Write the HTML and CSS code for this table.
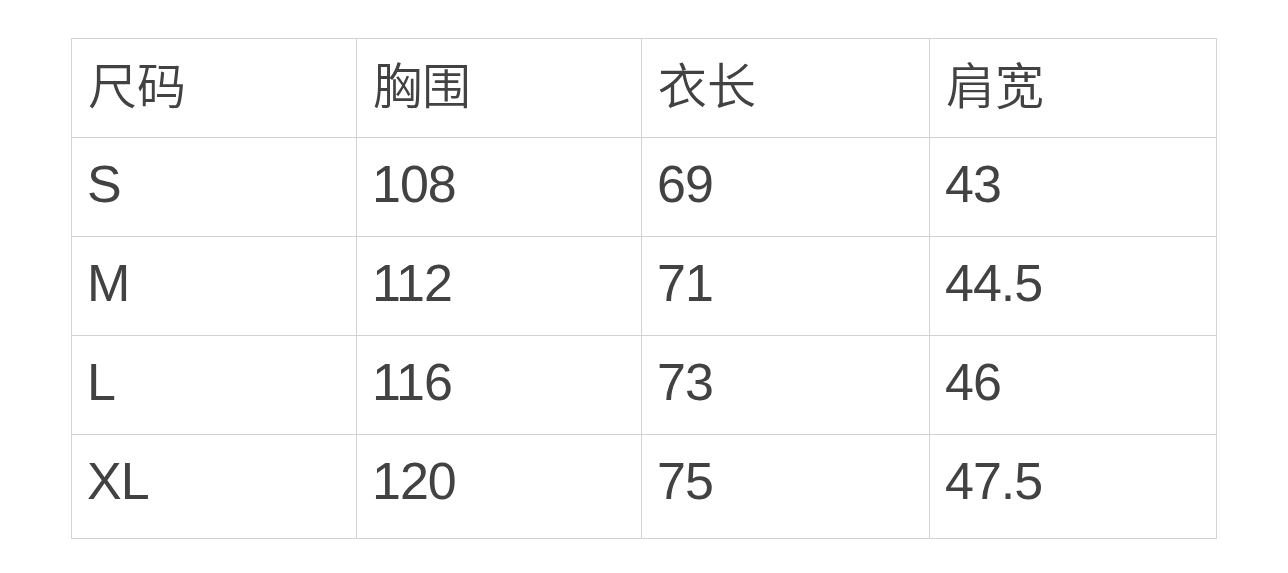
FILE: index.html
```html
<!DOCTYPE html>
<html lang="zh">
<head>
<meta charset="utf-8">
<title>尺码表</title>
<link rel="stylesheet" href="styles.css">
</head>
<body>
<table class="size-table">
  <colgroup>
    <col class="c1"><col class="c2"><col class="c3"><col class="c4">
  </colgroup>
  <tr class="row head"><td>尺码</td><td>胸围</td><td>衣长</td><td>肩宽</td></tr>
  <tr class="row"><td>S</td><td>108</td><td>69</td><td>43</td></tr>
  <tr class="row"><td>M</td><td>112</td><td>71</td><td>44.5</td></tr>
  <tr class="row"><td>L</td><td>116</td><td>73</td><td>46</td></tr>
  <tr class="row last"><td>XL</td><td>120</td><td>75</td><td>47.5</td></tr>
</table>
</body>
</html>
```
FILE: styles.css
```css
html, body {
  margin: 0;
  padding: 0;
  background: #ffffff;
}
body {
  padding: 38px 0 0 71px;
}
.size-table {
  border-collapse: collapse;
  table-layout: fixed;
  width: 1145px;
  font-family: "Liberation Sans", "Noto Sans CJK SC", sans-serif;
  font-size: 52px;
  line-height: 52px;
  letter-spacing: -1px;
  color: #424242;
}
.c1 { width: 285px; }
.c2 { width: 285px; }
.c3 { width: 288px; }
.c4 { width: 287px; }
.size-table td {
  border: 1px solid #d3d3d3;
  height: 78px;
  padding: 20px 0 0 15px;
  vertical-align: top;
  white-space: nowrap;
}
.size-table .head td {
  font-family: "Noto Sans CJK SC", sans-serif;
  font-size: 49px;
  font-weight: 350;
  letter-spacing: 0;
  height: 80px;
  padding-top: 18px;
  padding-left: 16px;
}
.size-table .last td {
  height: 83px;
}
```
